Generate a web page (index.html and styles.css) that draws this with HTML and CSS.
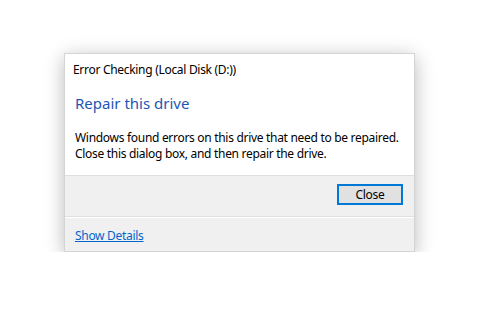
FILE: index.html
```html
<!DOCTYPE html>
<html lang="en">

<head>
  <meta charset="UTF-8">
  <meta name="viewport" content="width=device-width, initial-scale=1.0">
  <title>Error Checking</title>
  <link rel="stylesheet" href="styles.css">
</head>

<body>
  <div class="dialog">
    <header class="dialog-title">Error Checking (Local Disk (D:))</header>

    <section class="dialog-content">
      <h1 class="dialog-heading">Repair this drive</h1>
      <p class="dialog-text">Windows found errors on this drive that need to be repaired.<br>
        Close this dialog box, and then repair the drive.</p>
    </section>

    <div class="dialog-buttons">
      <button class="btn btn-default">Close</button>
    </div>

    <footer class="dialog-footer">
      <a href="#" class="dialog-link">Show Details</a>
    </footer>
  </div>
</body>

</html>
```

FILE: styles.css
```css
html {
  box-sizing: border-box;
  font-family: 'Noto Sans', sans-serif;
  font-size: 12px;
  letter-spacing: -.3px;
}

*,
*::after,
*::before {
  box-sizing: inherit;
}

body {
  margin: 0;
  padding: 53px 0 0 64px;
  background-color: #fff;
  color: #000;
}

.dialog {
  width: 351px;
  height: 199px;
  border: 1px solid #d4d4d4;
  background-color: #f0f0f0;
  box-shadow: 0 4px 18px rgba(0, 0, 0, .28);
  display: flex;
  flex-direction: column;
}

.dialog-title {
  padding: 8px 8px 0;
  height: 33px;
  line-height: 16px;
  background-color: #fff;
}

.dialog-content {
  padding: 6px 10px 0;
  height: 88px;
  background-color: #fff;
}

.dialog-heading {
  margin: 0;
  font-size: 15px;
  font-weight: normal;
  line-height: 20px;
  letter-spacing: 0;
  color: #1f55b3;
}

.dialog-text {
  margin: 17px 0 0;
  line-height: 16px;
  white-space: nowrap;
}

.dialog-buttons {
  display: flex;
  justify-content: flex-end;
  padding: 8px 11px 0;
  height: 41px;
  border-top: 1px solid #dfdfdf;
}

.btn {
  width: 66px;
  height: 21px;
  padding: 0;
  font-family: inherit;
  font-size: 12px;
  letter-spacing: inherit;
  color: #000;
  background-color: #e1e1e1;
  border: 1px solid #adadad;
}

.btn-default {
  border: 2px solid #0078d7;
}

.dialog-footer {
  flex: 1;
  padding: 11px 10px 0;
  border-top: 1px solid #dfdfdf;
  box-shadow: inset 0 1px 0 #fff;
  line-height: 16px;
}

.dialog-link {
  color: #0066cc;
}
```
